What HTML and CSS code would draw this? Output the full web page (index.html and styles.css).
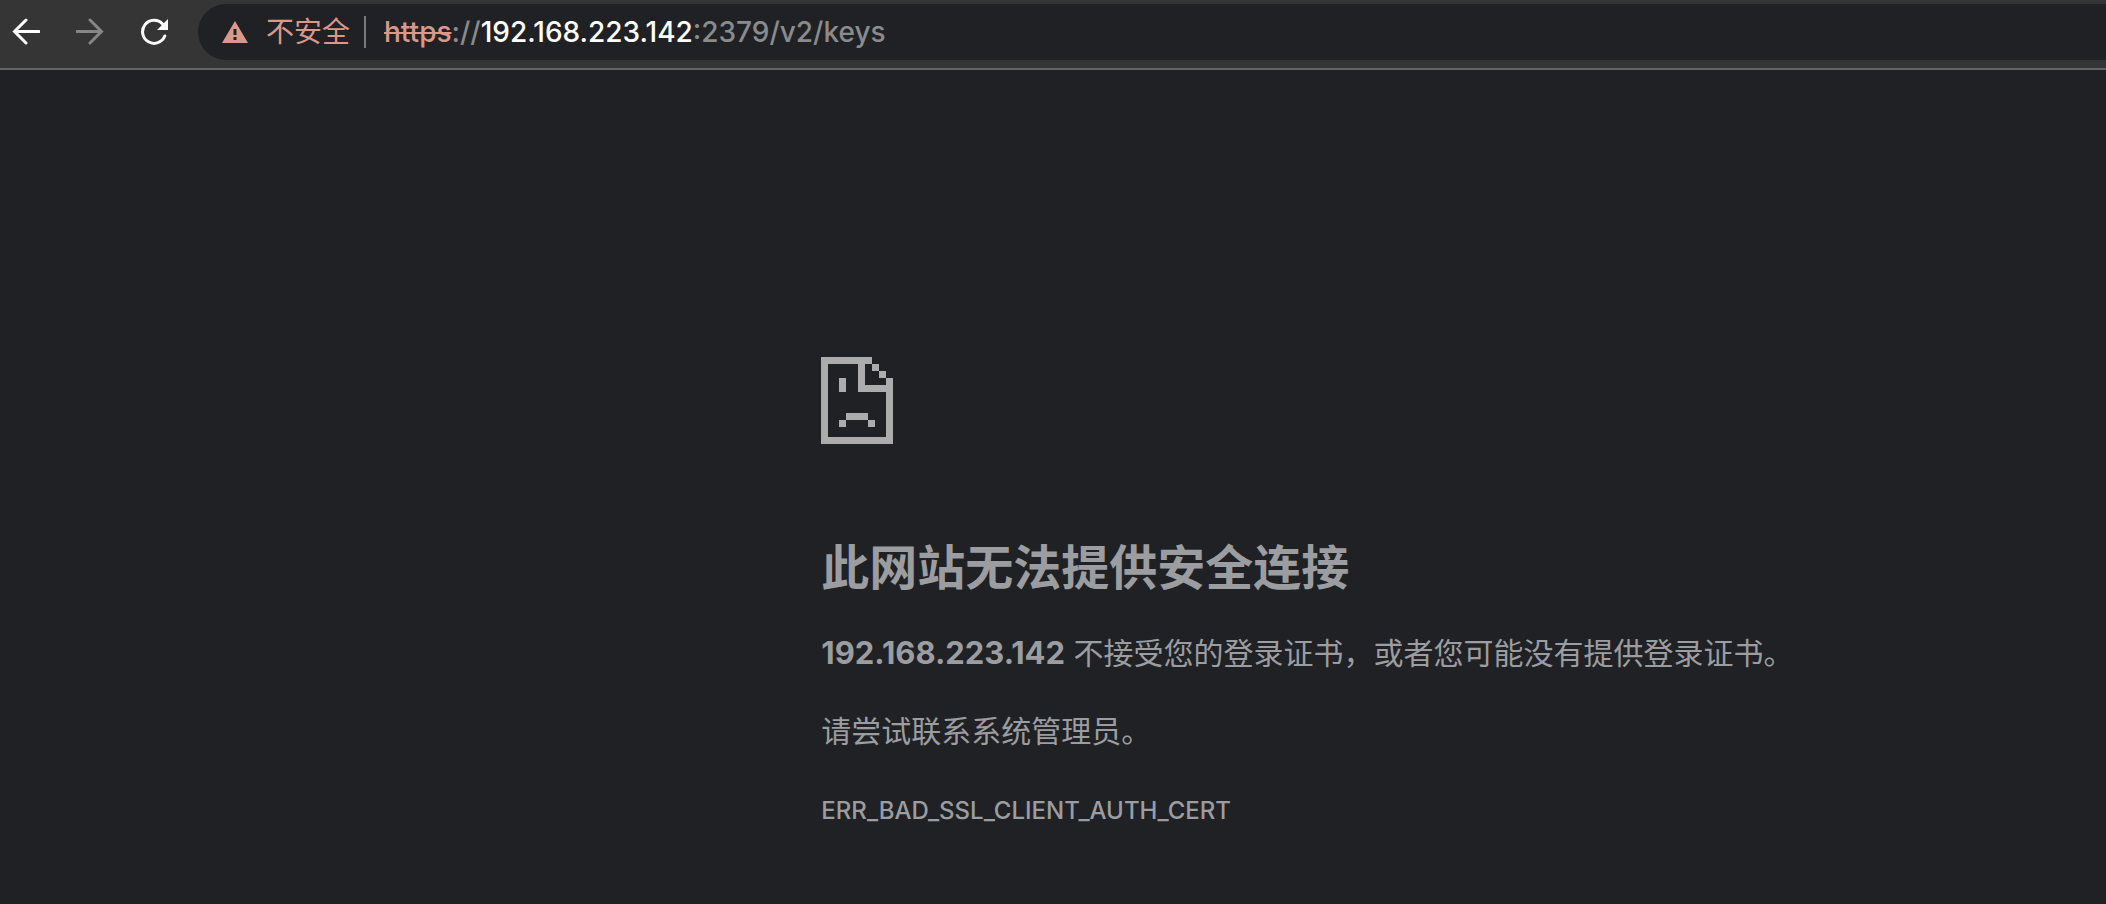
FILE: index.html
```
<!DOCTYPE html>
<html lang="zh-CN">
<head>
  <meta charset="UTF-8" />
  <title>192.168.223.142</title>
  <link rel="stylesheet" href="styles.css">
</head>
<body>
  <!-- TOOLBAR -->
  <header class="toolbar">
    <nav class="nav-buttons">
      <button class="nav-btn" type="button" aria-label="返回">
        <svg width="28" height="28" viewBox="0 0 28 28">
          <path d="M14 2 L2.500 13.500 L14 25 M2.500 13.500 H27" />
        </svg>
      </button>
      <button class="nav-btn" type="button" aria-label="前进" disabled>
        <svg width="28" height="28" viewBox="0 0 28 28">
          <path d="M14 2 L25.500 13.500 L14 25 M25.500 13.500 H1" />
        </svg>
      </button>
      <button class="nav-btn" type="button" aria-label="重新加载">
        <svg width="28" height="28" viewBox="0 0 28 28">
          <path d="M22.500 6 A11.500 11.500 0 1 0 24.800 18" />
          <path class="solid" d="M28 1 V12 H17 Z" />
        </svg>
      </button>
    </nav>
    <div class="omnibox">
      <button class="security" type="button">
        <svg width="26" height="22" viewBox="0 0 26 22">
          <path fill-rule="evenodd" d="M13 0 L26 22 H0 Z M11.500 8 V14 H14.500 V8 Z M11.500 16 V19 H14.500 V16 Z" />
        </svg>
        <span>不安全</span>
      </button>
      <span class="divider"></span>
      <div class="url" role="textbox" contenteditable="true" spellcheck="false" aria-label="地址和搜索栏"><span class="scheme">https</span>://<span class="host">192.168.223.142</span>:2379/v2/keys</div>
    </div>
  </header>

  <!-- ERROR PAGE -->
  <main class="error-page">
    <svg class="error-icon" width="72" height="87" viewBox="0 0 72 87" aria-hidden="true">
      <path d="M0 0 H51 V7 H44 V28 H65 V21 H72 V87 H0 Z M7 7 V80 H65 V35 H37 V7 Z" fill-rule="evenodd" />
      <path d="M51 7 h7 v7 h-7 Z M58 14 h7 v7 h-7 Z" />
      <path d="M18 21 h7 v14 h-7 Z" />
      <path d="M25 56 h22 v7 h-22 Z M18 63 h7 v7 h-7 Z M47 63 h7 v7 h-7 Z" />
    </svg>
    <h1>此网站无法提供安全连接</h1>
    <p><strong>192.168.223.142</strong> 不接受您的登录证书，或者您可能没有提供登录证书。</p>
    <p>请尝试联系系统管理员。</p>
    <p class="error-code">ERR_BAD_SSL_CLIENT_AUTH_CERT</p>
  </main>
</body>
</html>
```

FILE: styles.css
```
* {
  box-sizing: border-box;
}

body {
  margin: 0;
  background: #202124;
  color: #9b9da1;
  font-family: Inter, 'Noto Sans CJK SC', sans-serif;
}

button {
  padding: 0;
  border: none;
  background: none;
  font: inherit;
  color: inherit;
  cursor: pointer;
}

.toolbar {
  display: flex;
  align-items: center;
  gap: 30px;
  height: 70px;
  padding: 0 0 4px 12px;
  background: #353535;
  border-bottom: 2px solid #656565;
}

.nav-buttons {
  display: flex;
  gap: 36px;
}

.nav-btn {
  display: flex;
  color: #fff;
}

.nav-btn:disabled {
  color: #868686;
  cursor: default;
}

.nav-btn svg {
  fill: none;
  stroke: currentColor;
  stroke-width: 3;
  stroke-linecap: round;
}

.nav-btn .solid {
  fill: currentColor;
  stroke: none;
}

.omnibox {
  flex: 1;
  display: flex;
  align-items: center;
  height: 56px;
  padding-left: 24px;
  background: #202124;
  border-radius: 28px 0 0 28px;
  font-size: 28px;
  line-height: 40px;
}

.security {
  display: flex;
  align-items: center;
  gap: 18px;
  color: #d8988a;
}

.security svg {
  fill: currentColor;
}

.divider {
  width: 2px;
  height: 32px;
  margin: 0 18px 0 14px;
  background: #77787a;
}

.url {
  flex: 1;
  color: #8a8b8d;
  font-weight: 500;
  white-space: nowrap;
  outline: none;
}

.scheme {
  color: #d8988a;
  text-decoration: line-through;
  text-decoration-thickness: 2px;
}

.host {
  color: #fff;
}

.error-page {
  padding: 287px 24px 60px 39vw;
}

.error-icon {
  display: block;
  fill: #acacac;
  shape-rendering: crispEdges;
}

h1 {
  margin: 94px 0 31px;
  font-size: 48px;
  font-weight: 700;
  line-height: 60px;
}

p {
  margin: 0 0 30px;
  font-size: 30px;
  line-height: 48px;
}

strong {
  font-size: 31px;
}

.error-code {
  font-size: 24px;
  font-weight: 500;
  line-height: 52px;
}
```
